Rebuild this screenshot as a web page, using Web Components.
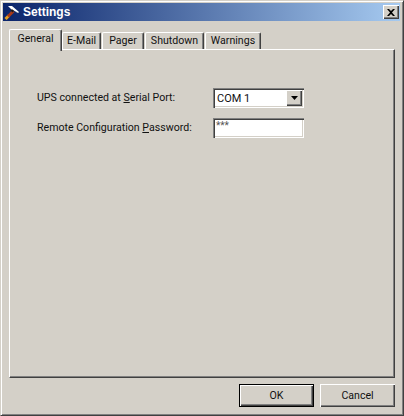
<!DOCTYPE html>
<html>
<head>
<meta charset="utf-8">
<title>Settings</title>
<style>
html, body { margin: 0; padding: 0; background: #d4d0c8; }
body { font: 10.6px Roboto, "Liberation Sans", Arial, sans-serif; color: #111; }
</style>
</head>
<body>
<settings-dialog>
    <title-bar slot="title">Settings</title-bar>
    <tab-strip slot="tabs">
        <tab-item active style="--w:53px">General</tab-item>
        <tab-item style="--w:39px">E-Mail</tab-item>
        <tab-item style="--w:42px">Pager</tab-item>
        <tab-item style="--w:59px">Shutdown</tab-item>
        <tab-item style="--w:56px">Warnings</tab-item>
    </tab-strip>
    <tab-panel slot="panel">
        <form-row><span slot="label">UPS connected at <u>S</u>erial Port:</span><combo-box value="COM 1"></combo-box></form-row>
        <form-row><span slot="label">Remote Configuration <u>P</u>assword:</span><text-box value="***"></text-box></form-row>
    </tab-panel>
    <push-button slot="buttons" default>OK</push-button>
    <push-button slot="buttons">Cancel</push-button>
</settings-dialog>

<script>
class SettingsDialog extends HTMLElement {
    constructor() {
        super();
        this.attachShadow({mode: 'open'});
        this.shadowRoot.innerHTML = `
<style>
:host {
    display: flex;
    flex-direction: column;
    box-sizing: border-box;
    width: 404px;
    height: 416px;
    padding: 2px 3px 3px 2px;
    background: #d4d0c8;
    border-top: 1px solid #d4d0c8;
    border-left: 1px solid #d4d0c8;
    border-right: 1px solid #404040;
    border-bottom: 1px solid #404040;
    box-shadow: inset 1px 1px 0 #fff, inset -1px -1px 0 #808080;
}
#body {
    display: flex;
    flex-direction: column;
    flex: 1;
    padding: 8px 5px 0 6px;
}
#buttons {
    display: flex;
    justify-content: flex-end;
    gap: 6px;
    padding: 6px 0 5px 0;
}
</style>
<slot name="title"></slot>
<div id="body">
    <slot name="tabs"></slot>
    <slot name="panel"></slot>
    <div id="buttons"><slot name="buttons"></slot></div>
</div>`;
    }
}

class TitleBar extends HTMLElement {
    constructor() {
        super();
        this.attachShadow({mode: 'open'});
        this.shadowRoot.innerHTML = `
<style>
:host {
    display: flex;
    align-items: center;
    height: 18px;
    padding: 0 1px 0 1px;
    background: linear-gradient(to right, #0a246a, #a6caf0);
    color: #fff;
    font: bold 12px "Liberation Sans", Arial, sans-serif;
}
svg { flex: none; }
#text { flex: 1; margin-left: 3px; }
#close {
    box-sizing: border-box;
    width: 16px;
    height: 14px;
    display: flex;
    align-items: center;
    justify-content: center;
    background: #d4d0c8;
    box-shadow: inset 1px 1px 0 #fff, inset -1px -1px 0 #404040, inset -2px -2px 0 #808080;
}
</style>
<svg width="16" height="16" viewBox="0 0 16 16">
    <path d="M1.500 15l3.500-3.500" stroke="#e8a020" stroke-width="3"/>
    <path d="M4 12.500l5.500-5.500" stroke="#a83a18" stroke-width="3"/>
    <path d="M4 2l4 0 7 6-1 1-5-3-1 1-1-2z" fill="#fff"/>
    <path d="M8 5l2 2-1.500 1.500-2-2z" fill="#1a1a1a"/>
    <path d="M11 7l3 1.500-.5 .5z" fill="#9a9a9a"/>
</svg>
<span id="text"><slot></slot></span>
<div id="close">
    <svg width="8" height="7" viewBox="0 0 8 7"><path d="M0 0h2l2 2 2-2h2L5 3.500 8 7H6L4 5 2 7H0l3-3.500z" fill="#000"/></svg>
</div>`;
    }
}

class TabStrip extends HTMLElement {
    constructor() {
        super();
        this.attachShadow({mode: 'open'});
        this.shadowRoot.innerHTML = `
<style>
:host {
    display: flex;
    align-items: flex-end;
    height: 22px;
    padding-left: 2px;
    position: relative;
    z-index: 1;
    margin-bottom: -2px;
}
</style>
<slot></slot>`;
    }
}

class TabItem extends HTMLElement {
    constructor() {
        super();
        this.attachShadow({mode: 'open'});
        this.shadowRoot.innerHTML = `
<style>
:host {
    display: block;
    box-sizing: border-box;
    width: var(--w);
    height: 17px;
    padding-top: 1px;
    text-align: center;
    margin-bottom: 2px;
    margin-right: 1px;
    background: #d4d0c8;
    border-top: 1px solid #fff;
    border-left: 1px solid #fff;
    border-right: 1px solid #404040;
    border-radius: 2px 2px 0 0;
    box-shadow: inset -1px 0 0 #808080;
    white-space: nowrap;
}
:host([active]) {
    height: 22px;
    padding-top: 2px;
    margin-bottom: 0;
    margin-left: -2px;
    margin-right: 0;
    position: relative;
    z-index: 2;
}
</style>
<slot></slot>`;
    }
}

class TabPanel extends HTMLElement {
    constructor() {
        super();
        this.attachShadow({mode: 'open'});
        this.shadowRoot.innerHTML = `
<style>
:host {
    display: flex;
    flex-direction: column;
    flex: 1;
    gap: 10px;
    box-sizing: border-box;
    padding: 38px 0 0 27px;
    background: #d4d0c8;
    border-top: 1px solid #fff;
    border-left: 1px solid #fff;
    border-right: 1px solid #404040;
    border-bottom: 1px solid #404040;
    box-shadow: inset -1px -1px 0 #808080;
}
</style>
<slot></slot>`;
    }
}

class FormRow extends HTMLElement {
    constructor() {
        super();
        this.attachShadow({mode: 'open'});
        this.shadowRoot.innerHTML = `
<style>
:host {
    display: flex;
    align-items: center;
    height: 20px;
}
#label { width: 176px; flex: none; padding-bottom: 1px; }
</style>
<div id="label"><slot name="label"></slot></div>
<slot></slot>`;
    }
}

class ComboBox extends HTMLElement {
    constructor() {
        super();
        this.attachShadow({mode: 'open'});
        this.shadowRoot.innerHTML = `
<style>
:host {
    display: flex;
    box-sizing: border-box;
    width: 91px;
    height: 20px;
    padding: 2px;
    background: #fff;
    box-shadow: inset 1px 1px 0 #808080, inset 2px 2px 0 #404040, inset -1px -1px 0 #fff, inset -2px -2px 0 #d4d0c8;
}
#value { flex: 1; padding: 2px 0 0 2px; font-size: 11px; }
#arrow {
    width: 16px;
    display: flex;
    align-items: center;
    justify-content: center;
    background: #d4d0c8;
    box-shadow: inset 1px 1px 0 #fff, inset -1px -1px 0 #404040, inset -2px -2px 0 #808080;
}
</style>
<div id="value"></div>
<div id="arrow"><svg width="7" height="4" viewBox="0 0 7 4"><path d="M0 0h7L3.500 4z" fill="#000"/></svg></div>`;
        this.shadowRoot.getElementById("value").textContent = this.getAttribute("value");
    }
}

class TextBox extends HTMLElement {
    constructor() {
        super();
        this.attachShadow({mode: 'open'});
        this.shadowRoot.innerHTML = `
<style>
:host {
    display: block;
    box-sizing: border-box;
    width: 91px;
    height: 20px;
    padding: 2px 0 0 3px;
    background: #fff;
    color: #555;
    font-size: 10px;
    box-shadow: inset 1px 1px 0 #808080, inset 2px 2px 0 #404040, inset -1px -1px 0 #fff, inset -2px -2px 0 #d4d0c8;
}
</style>
<span id="value"></span>`;
        this.shadowRoot.getElementById("value").textContent = this.getAttribute("value");
    }
}

class PushButton extends HTMLElement {
    constructor() {
        super();
        this.attachShadow({mode: 'open'});
        this.shadowRoot.innerHTML = `
<style>
:host {
    display: flex;
    align-items: center;
    justify-content: center;
    box-sizing: border-box;
    width: 75px;
    height: 23px;
    background: #d4d0c8;
    box-shadow: inset 1px 1px 0 #fff, inset -1px -1px 0 #404040, inset -2px -2px 0 #808080;
}
:host([default]) {
    border: 1px solid #000;
}
</style>
<slot></slot>`;
    }
}

customElements.define("settings-dialog", SettingsDialog);
customElements.define("title-bar", TitleBar);
customElements.define("tab-strip", TabStrip);
customElements.define("tab-item", TabItem);
customElements.define("tab-panel", TabPanel);
customElements.define("form-row", FormRow);
customElements.define("combo-box", ComboBox);
customElements.define("text-box", TextBox);
customElements.define("push-button", PushButton);
</script>
</body>
</html>
